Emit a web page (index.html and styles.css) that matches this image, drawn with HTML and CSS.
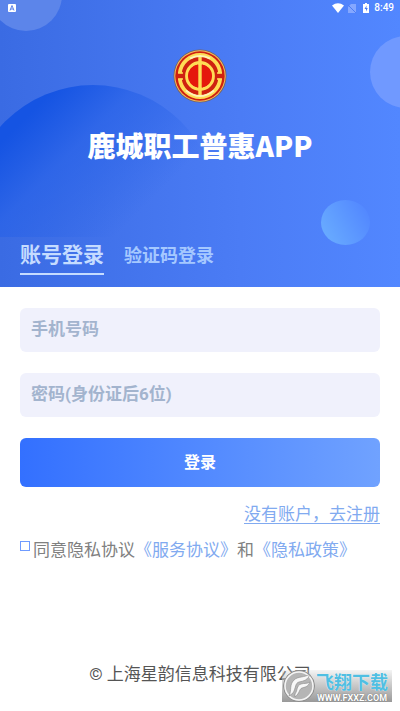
FILE: index.html
```html
<!DOCTYPE html>
<html lang="zh-CN">
<head>
    <meta charset="utf-8">
    <meta name="viewport" content="width=device-width, initial-scale=1">
    <title>鹿城职工普惠APP</title>
    <link rel="stylesheet" href="styles.css">
</head>
<body>
    <header class="hero">
        <div class="bubble bubble-left"></div>
        <div class="bubble bubble-right"></div>
        <div class="bubble bubble-big"></div>
        <div class="bubble bubble-small"></div>

        <!-- Status bar -->
        <div class="status-bar">
            <svg width="8" height="8" viewBox="0 0 8 8">
                <rect width="8" height="8" rx="1" fill="#fff"/>
                <path d="M2 6.5L4 1.5L6 6.5M2.8 5H5.2" fill="none" stroke="#5c82ea"/>
            </svg>
            <div class="status-right">
                <svg width="12" height="10" viewBox="0 0 12 10">
                    <path d="M0 2.6Q6 -2 12 2.6L6 10Z" fill="#fff"/>
                </svg>
                <svg class="sim" width="8" height="9" viewBox="0 0 8 9">
                    <path d="M3 0H8V9H0V3Z" fill="#84a7ff"/>
                    <path d="M0 1L8 9" stroke="#4b7cf5"/>
                </svg>
                <svg class="battery" width="6" height="10" viewBox="0 0 6 10">
                    <path d="M0 1H2V0H4V1H6V10H0Z" fill="#fff"/>
                    <path d="M3.6 2.5L1.5 6H3V8.5L4.8 5H3.4Z" fill="#4b7cf5"/>
                </svg>
                <span>8:49</span>
            </div>
        </div>

        <svg class="logo" width="54" height="54" viewBox="0 0 54 54">
            <circle cx="27" cy="27" r="26.5" fill="#76605f"/>
            <circle cx="27" cy="27" r="25.7" fill="#f4bd5c"/>
            <circle cx="27" cy="27" r="24.7" fill="#cf2110"/>
            <g fill="none" stroke="#ffdc55">
                <path d="M6.8 24.2A20.3 20.3 0 0 1 47.2 24.2M6.8 29.8A20.3 20.3 0 0 0 47.2 29.8" stroke-width="3.8"/>
                <circle cx="27" cy="27" r="13.2" stroke-width="3.4"/>
                <path d="M27 7V47" stroke-width="3.4"/>
                <path d="M5 24H10M44 24H49M5 30H10M44 30H49" stroke-width="1.6"/>
            </g>
            <path d="M17 9.5Q27 4.5 37 9.5M13 41.5Q27 52.5 41 41.5" fill="none" stroke="#fff3b8" stroke-width="2"/>
            <path d="M25 15.5A11.6 11.6 0 0 0 25 38.5ZM29 15.5A11.6 11.6 0 0 1 29 38.5Z" fill="#e5180d"/>
        </svg>
        <h1 class="app-title">鹿城职工普惠APP</h1>

        <nav class="tabs">
            <button type="button" class="tab tab-active">账号登录</button>
            <button type="button" class="tab">验证码登录</button>
        </nav>
    </header>

    <!-- Login form -->
    <form class="login-form">
        <input class="field" type="text" aria-label="手机号码" placeholder="手机号码">
        <input class="field" type="password" aria-label="密码" placeholder="密码(身份证后6位)">
        <button type="button" class="login-button">登录</button>
        <a class="register" href="#">没有账户，去注册</a>
        <div class="agreement">
            <input type="checkbox" id="agree" class="check">
            <span><label for="agree">同意隐私协议</label><a href="#">《服务协议》</a>和<a href="#">《隐私政策》</a></span>
        </div>
    </form>

    <footer class="footer">
        © 上海星韵信息科技有限公司
        <div class="site-mark">
            <svg width="34" height="34" viewBox="0 0 34 34">
                <circle cx="17" cy="17" r="15.5" fill="#b5b5b5" stroke="#8d8d8d"/>
                <circle cx="17" cy="17" r="14" fill="none" stroke="#f4f4f4" stroke-width="1.5"/>
                <path d="M7 27C10 21 7 16 12 11C16 7 22 9 28 5C26 11 22 12 17 13C13 14 14 19 11 24Z" fill="#f7f7f7" stroke="#888" stroke-width=".6"/>
                <path d="M13 25C16 21 14 17 19 15C22 14 25 15 28 13C26 18 23 18 20 19C17 20 18 24 13 28Z" fill="#f7f7f7" stroke="#888" stroke-width=".6"/>
            </svg>
            <div class="mark-text">
                <span class="mark-name">飞翔下载</span>
                <span class="mark-url">WWW.FXXZ.COM</span>
            </div>
        </div>
    </footer>
</body>
</html>
```

FILE: styles.css
```css
* {
    box-sizing: border-box;
}

body {
    margin: 0;
    min-height: 100vh;
    display: flex;
    flex-direction: column;
    background-color: #fff;
    font-family: Roboto, "Noto Sans CJK SC", sans-serif;
    font-size: 17px;
    line-height: 24px;
}

button, input {
    font-family: inherit;
}

/* blue top part */
.hero {
    position: relative;
    overflow: hidden;
    display: flex;
    flex-direction: column;
    align-items: center;
    padding-bottom: 12px;
    background: linear-gradient(90deg, #3a6be3, #4b7cf5 60%, #5287ff);
}

.status-bar, .logo, .app-title, .tabs {
    position: relative;
}

/* background circles */
.bubble {
    position: absolute;
    border-radius: 50%;
}

.bubble-left {
    left: -10px;
    top: -41px;
    width: 72px;
    height: 72px;
    background-color: #5c85ea;
}

.bubble-right {
    right: -42px;
    top: 36px;
    width: 72px;
    height: 72px;
    background-color: #7099ff;
}

.bubble-big {
    left: -31px;
    top: 85px;
    width: 248px;
    height: 248px;
    background: linear-gradient(135deg, #1554e3 18%, rgba(40, 98, 232, 0.7) 34%, rgba(60, 110, 238, 0) 60%);
    clip-path: inset(0 0 96px 0);
}

.bubble-small {
    right: 30px;
    top: 200px;
    width: 49px;
    height: 45px;
    background: linear-gradient(60deg, #67a9ff 15%, #5287ff 90%);
}

.status-bar {
    display: flex;
    justify-content: space-between;
    align-items: center;
    width: 100%;
    height: 16px;
    padding: 0 6px 0 8px;
}

.status-right {
    display: flex;
    align-items: center;
    color: #fff;
    font-size: 10px;
    font-weight: 500;
    line-height: 16px;
}

.sim {
    margin-left: 4px;
}

.battery {
    margin: 0 5px 0 7px;
}

.logo {
    margin-top: 33px;
}

.app-title {
    margin: 24px 0 0;
    color: #fff;
    font-family: "Noto Sans CJK SC", sans-serif;
    font-size: 28px;
    font-weight: 900;
    line-height: 36px;
}

.tabs {
    align-self: stretch;
    display: flex;
    align-items: center;
    gap: 20px;
    margin-top: 75px;
    padding: 0 20px;
}

.tab {
    padding: 0;
    border: none;
    border-bottom: 2px solid transparent;
    background: none;
    color: #a5c8ff;
    font-size: 18px;
    font-weight: bold;
    line-height: 35px;
    cursor: pointer;
}

.tab-active {
    border-bottom-color: #c5dcff;
    color: #c5dcff;
    font-size: 21px;
}

/* form */
.login-form {
    display: flex;
    flex-direction: column;
    padding: 21px 20px;
}

.field {
    width: 100%;
    height: 44px;
    margin-bottom: 21px;
    padding: 0 11px 2px;
    border: none;
    border-radius: 6px;
    background-color: #f0f1fc;
    color: #555;
    font-size: 17px;
    font-weight: bold;
}

.field::placeholder {
    color: #a3b4ce;
    opacity: 1;
}

.login-button {
    height: 49px;
    padding-bottom: 4px;
    border: none;
    border-radius: 6px;
    background: linear-gradient(90deg, #3370ff, #70a2ff);
    color: #fff;
    font-size: 16px;
    font-weight: bold;
    cursor: pointer;
}

.register {
    align-self: flex-end;
    margin-top: 15px;
    color: #81aaf0;
    text-underline-offset: 3px;
}

.agreement {
    display: flex;
    align-items: flex-start;
    gap: 3px;
    margin-top: 12px;
    color: #808080;
    white-space: nowrap;
}

.agreement a {
    color: #81aaf0;
    text-decoration: none;
}

.check {
    appearance: none;
    flex: none;
    width: 10px;
    height: 10px;
    margin: 3px 0 0;
    border: 1px solid #6f9bff;
    background-color: #fff;
}

.check:checked {
    background-color: #6f9bff;
}

.footer {
    position: relative;
    margin-top: auto;
    padding-bottom: 25px;
    color: #555;
    text-align: center;
}

/* download site stamp over the footer */
.site-mark {
    position: absolute;
    right: 8px;
    bottom: 9px;
    display: flex;
    align-items: center;
    width: 110px;
    height: 32px;
    background: linear-gradient(rgba(220, 220, 220, 0.3), #999);
}

.mark-text {
    display: flex;
    flex-direction: column;
    align-items: center;
    white-space: nowrap;
}

.mark-name {
    color: #50bfe2;
    font-family: "Noto Sans CJK SC", sans-serif;
    font-size: 18px;
    font-weight: bold;
    line-height: 23px;
    text-shadow: 0 0 1px #fff;
}

.mark-url {
    color: #fff;
    font-size: 9px;
    font-weight: bold;
    line-height: 10px;
    text-shadow: 0 0 1px #555;
}
```
